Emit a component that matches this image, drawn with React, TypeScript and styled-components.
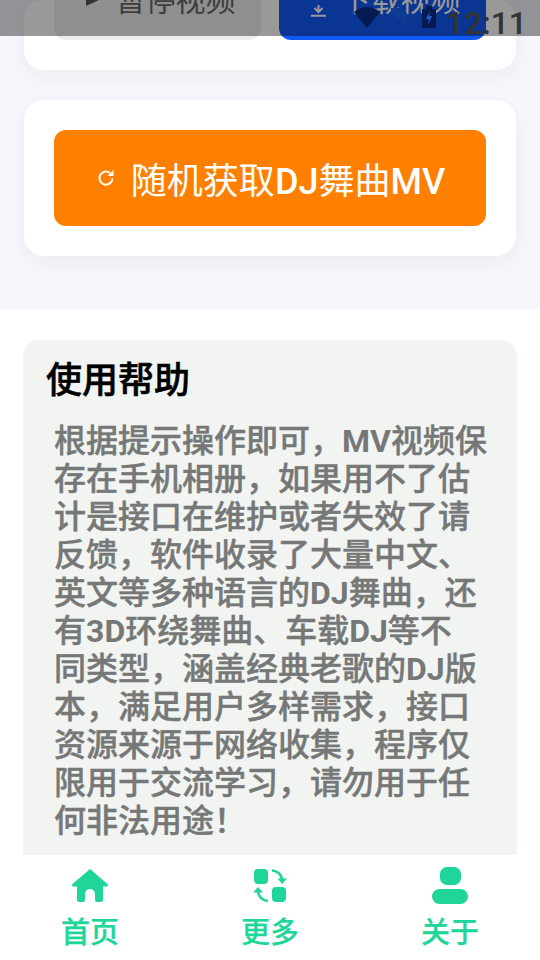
import React from "react";
import styled, { createGlobalStyle } from "styled-components";

const Global = createGlobalStyle`
  html, body { margin: 0; padding: 0; background: #fff; }
  body { font-family: Roboto, "Noto Sans CJK SC", sans-serif; }
  * { box-sizing: border-box; }
`;
const Phone = styled.div`
  position: relative; width: 540px; height: 960px; overflow: hidden;
  background: #fff;
`;
const Scroller = styled.main`height: 960px; overflow: hidden;`;
const Upper = styled.section`
  height: 310px; background: #f5f7fc; padding: 0 24px;
  display: flex; flex-direction: column; gap: 30px;
`;
const Card = styled.div`
  background: #fff; border-radius: 20px; padding: 30px;
  box-shadow: 0 6px 20px rgba(30, 40, 80, 0.05);
`;
const VideoCard = styled(Card)`
  height: 70px; padding: 0 30px 30px; display: flex; align-items: flex-end; gap: 18px;
`;
const ActionButton = styled.button<{ $primary?: boolean }>`
  flex: 1; height: 96px; margin-top: -56px; border: 0; border-radius: 12px;
  background: ${p => (p.$primary ? "#1159f5" : "#eeeeee")};
  color: ${p => (p.$primary ? "#fff" : "#666")};
  font: 400 30px Roboto, "Noto Sans CJK SC", sans-serif;
  display: flex; align-items: flex-end; justify-content: center; gap: 15px; padding: 0 0 20px 6px;
  line-height: 38px;
`;
const ButtonIcon = styled.svg<{ $drop: number }>`
  display: block; flex: none; margin-bottom: ${p => p.$drop}px;
`;
const RandomButton = styled.button`
  width: 100%; height: 96px; border: 0; border-radius: 12px; background: #ff7f00; color: #fff;
  font: 400 36px Roboto, "Noto Sans CJK SC", sans-serif;
  display: flex; align-items: center; justify-content: center; gap: 17px; padding: 0 0 0 3px;
`;
const Latin = styled.span<{ $weight: number }>`
  font-weight: ${p => p.$weight};
  -webkit-text-stroke: 0;
`;
const Lower = styled.section`padding: 30px 23px 0 23px;`;
const Help = styled.article`
  background: #f2f4f2; border-radius: 16px; padding: 16px 23px 30px; height: 560px;
`;
const HelpTitle = styled.h2`
  margin: 0; font-size: 36px; font-weight: 500; color: #000; line-height: 50px;
  -webkit-text-stroke: 0.55px #000;
`;
const HelpText = styled.p`
  margin: 16px 0 0 8px; width: 436px; font-size: 32px; font-weight: 500; color: #767877; line-height: 38px;
  -webkit-text-stroke: 0.45px #767877;
`;
const Nav = styled.nav`
  height: 105px; background: #fff; border-radius: 6px 6px 0 0;
  display: grid; grid-template-columns: repeat(3, 1fr); position: absolute; left: 0; right: 0; bottom: 0;
`;
const NavItem = styled.a`
  display: flex; flex-direction: column; align-items: center; color: #20d59a;
  font-size: 29px; font-weight: 500; line-height: 40px; padding-top: 10px; gap: 8px;
  -webkit-text-stroke: 0.25px #20d59a;
`;
const NavIcon = styled.svg`width: 40px; height: 40px; display: block;`;
const StatusBar = styled.div`
  position: absolute; left: 0; right: 0; top: 0; height: 36px; background: rgba(0, 0, 0, 0.4);
  display: flex; justify-content: flex-end; align-items: flex-start; padding-right: 13px;
`;
const Clock = styled.span`font-size: 32px; font-weight: 500; line-height: 36px; margin: 5px 0 0 10px; color: #333;`;
const StatusIcon = styled.svg<{ $left: number; $top: number }>`
  display: block; margin: ${p => p.$top}px 0 0 ${p => p.$left}px; flex: none;
`;

export default function App() {
  return (
    <Phone>
      <Global />
      <Scroller>
        <Upper>
          <VideoCard>
            <ActionButton>
              <ButtonIcon $drop={14} width="15" height="14" viewBox="0 0 15 14"><path d="M0 0 L15 7 L0 14Z" fill="#555" /></ButtonIcon>
              暂停视频
            </ActionButton>
            <ActionButton $primary>
              <ButtonIcon $drop={3} width="15" height="12" viewBox="0 0 15 12"><path d="M7.500 0v6M3.500 3l4 4 4-4M0 10.800h15" stroke="#fff" strokeWidth="2" fill="none" /></ButtonIcon>
              下载视频
            </ActionButton>
          </VideoCard>
          <Card>
            <RandomButton>
              <svg width="16" height="16" viewBox="0 0 16 16"><path d="M14.500 8.500A6.500 6.500 0 1 1 12 3" stroke="#fff" strokeWidth="2" fill="none" /><path d="M9.500 6h6V0Z" fill="#fff" /></svg>
              <span>随机获取<Latin $weight={500}>DJ</Latin>舞曲<Latin $weight={500}>MV</Latin></span>
            </RandomButton>
          </Card>
        </Upper>
        <Lower>
          <Help>
            <HelpTitle>使用帮助</HelpTitle>
            <HelpText>
              根据提示操作即可，<Latin $weight={700}>MV</Latin>视频保存在手机相册，如果用不了估计是接口在维护或者失效了请反馈，软件收录了大量中文、英文等多种语言的<Latin $weight={700}>DJ</Latin>舞曲，还有<Latin $weight={700}>3D</Latin>环绕舞曲、车载<Latin $weight={700}>DJ</Latin>等不<br />同类型，涵盖经典老歌的<Latin $weight={700}>DJ</Latin>版本，满足用户多样需求，接口资源来源于网络收集，程序仅限用于交流学习，请勿用于任何非法用途！
            </HelpText>
          </Help>
        </Lower>
      </Scroller>
      <Nav>
        <NavItem>
          <NavIcon viewBox="0 0 40 40"><path d="M20 4 L37.500 19 a1.500 1.500 0 0 1 -1 2.600 H33 V34.500 a2.500 2.500 0 0 1 -2.500 2.500 H27 a2 2 0 0 1 -2 -2 V29 a5 5 0 0 0 -10 0 V35 a2 2 0 0 1 -2 2 H9.500 A2.500 2.500 0 0 1 7 34.500 V21.600 H3.500 A1.500 1.500 0 0 1 2.500 19 Z" fill="#20d59a" /></NavIcon>
          首页
        </NavItem>
        <NavItem>
          <NavIcon viewBox="0 0 40 40">
            <rect x="4" y="4" width="14" height="15" rx="4" fill="#20d59a" />
            <rect x="22" y="22" width="14" height="15" rx="4" fill="#20d59a" />
            <path d="M22 5.500C28 6 31 9.500 32 14" stroke="#20d59a" strokeWidth="2.600" fill="none" />
            <path d="M27.500 13.500H37L32.200 19Z" fill="#20d59a" />
            <path d="M18 36C12.500 35.500 9 32 8 27" stroke="#20d59a" strokeWidth="2.600" fill="none" />
            <path d="M3 27.500H13L8 22Z" fill="#20d59a" />
          </NavIcon>
          更多
        </NavItem>
        <NavItem>
          <NavIcon viewBox="0 0 40 40">
            <rect x="10" y="2" width="21" height="18" rx="7" fill="#20d59a" />
            <rect x="2" y="24" width="36" height="15" rx="7.500" fill="#20d59a" />
          </NavIcon>
          关于
        </NavItem>
      </Nav>
      <StatusBar>
        <StatusIcon $left={0} $top={7} width="26" height="21" viewBox="0 0 26 21"><path d="M0 5 Q13 -5 26 5 L13 21Z" fill="#051a50" /></StatusIcon>
        <StatusIcon $left={11} $top={8} width="17" height="20" viewBox="0 0 17 20"><path d="M0 0H11L16 5V20L0 3Z" fill="#0f3a95" /></StatusIcon>
        <StatusIcon $left={14} $top={6} width="14" height="22" viewBox="0 0 14 22"><path d="M4 0h6v3h4v19H0V3h4Z" fill="#051a50" /><path d="M8 5 L4 13 H7 L6 19 L10 10 H7Z" fill="#1b5fd0" /></StatusIcon>
        <Clock>12:11</Clock>
      </StatusBar>
    </Phone>
  );
}
